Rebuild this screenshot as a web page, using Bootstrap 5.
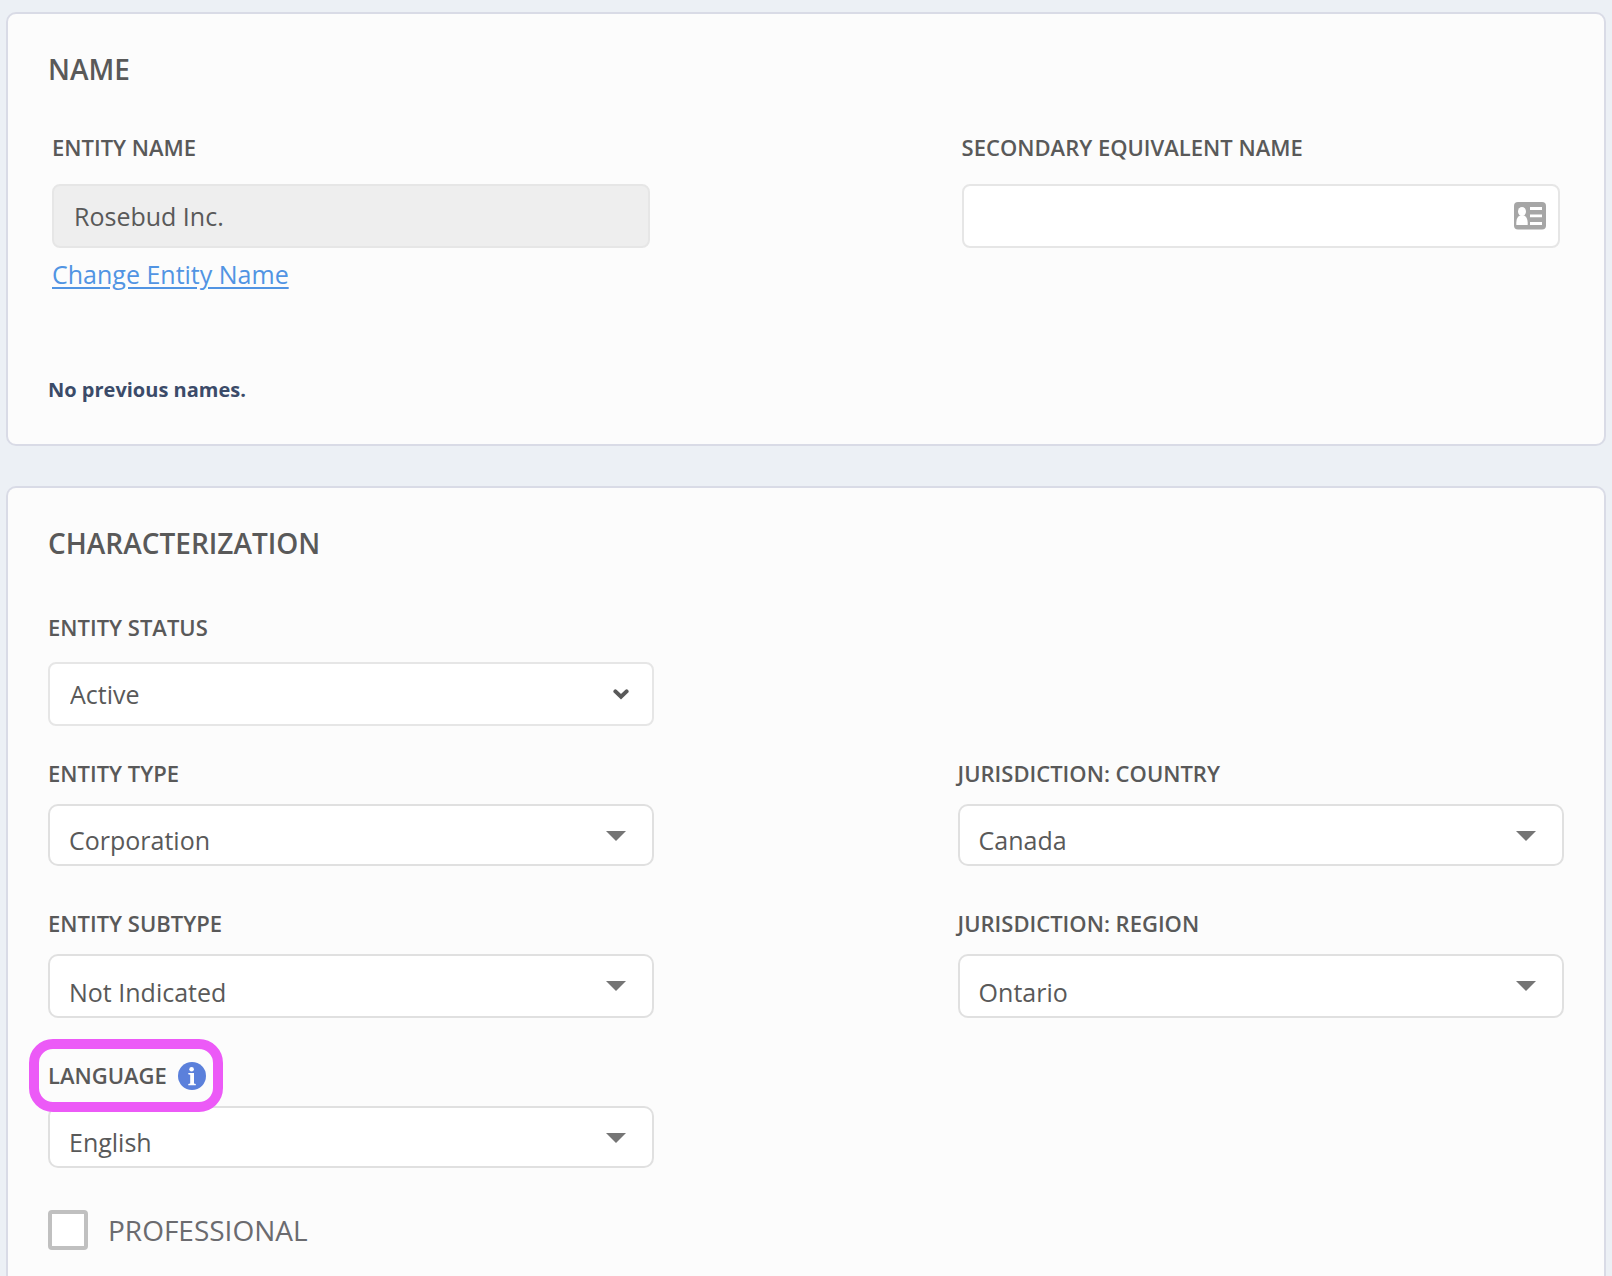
<!DOCTYPE html>
<html lang="en">
<head>
<meta charset="utf-8">
<meta name="viewport" content="width=device-width, initial-scale=1">
<title>Entity profile</title>
<link href="https://cdn.jsdelivr.net/npm/bootstrap@5.3.0/dist/css/bootstrap.min.css" rel="stylesheet">
<style>
  body { background: #ecf0f5; color: #595959; font-family: "Open Sans", "Noto Sans", sans-serif; font-size: 25px; padding: 12px 6px 0; }
  .panel { background: #fcfcfc; border: 2px solid #d9dbe6; border-radius: 10px; padding: 36px 40px 40px; }
  .panel + .panel { margin-top: 40px; }
  .panel-title { font-size: 28px; line-height: 38px; font-weight: 600; margin: 0; }
  .field { width: 40%; }
  .field-label { display: block; font-size: 22px; line-height: 30px; font-weight: 600; margin-bottom: 16px; }
  .status-row .field-label { margin-bottom: 20px; }
  .names { margin-top: 44px; }
  .names .field { padding: 0 4px; }
  .names .field-label { margin-bottom: 22px; }
  .names-history { font-size: 20px; line-height: 28px; font-weight: 700; color: #3b4b69; margin: 84px 0 0; }
  .change-link { display: block; width: fit-content; color: #5194e3; line-height: 36px; margin-top: 8px; text-underline-offset: 3px; }
  .form-control, .form-select, .form-control:disabled { color: #595959; border: 2px solid #e6e6e6; border-radius: 8px; font-size: 25px; line-height: 34px; height: 64px; padding: 13px 20px; }
  .form-control:disabled { background: #eeeeee; opacity: 1; }
  .form-select { padding: 13px 60px 13px 20px; background: #fff url("data:image/svg+xml,%3Csvg xmlns='http://www.w3.org/2000/svg' viewBox='0 0 16 11'%3E%3Cpath fill='none' stroke='%23595959' stroke-width='4' stroke-linecap='round' stroke-linejoin='miter' d='M2.4 2.4L8 7.8L13.6 2.4'/%3E%3C/svg%3E") no-repeat right 23px top 25px / 16px 11px; }
  .select-caret { height: 62px; border-color: #e0e0e0; border-radius: 10px; padding: 17px 60px 7px 19px; background: #fff url("data:image/svg+xml,%3Csvg xmlns='http://www.w3.org/2000/svg' viewBox='0 0 20 10'%3E%3Cpath fill='%23757575' d='M0 0H20L10 10Z'/%3E%3C/svg%3E") no-repeat right 26px top 25px / 20px 10px; }
  .select-tall { height: 64px; padding-top: 19px; }
  .card-glyph { right: 14px; top: 18px; width: 32px; height: 28px; }
  .status-row { margin-top: 50px; }
  .entity-rows { gap: 42px; margin-top: 32px; }
  .info-glyph { width: 28px; height: 28px; margin: 2px 0 0 11px; }
  .highlight-ring { left: -19px; top: -21px; width: 194px; height: 73px; border: 10px solid #ec5af7; border-radius: 24px; pointer-events: none; }
  .pro-check { gap: 20px; color: #6b6b6f; font-size: 28px; line-height: 38px; }
  .pro-check .form-check-input { width: 40px; height: 40px; border: 4px solid #c0c0c0; border-radius: 4px; margin: 0; }
</style>
</head>
<body class="d-flex flex-column min-vh-100">
<section class="panel" aria-labelledby="name-title">
  <h2 class="panel-title" id="name-title">NAME</h2>
  <div class="names d-flex justify-content-between">
    <div class="field">
      <label class="field-label" for="entity-name">ENTITY NAME</label>
      <input class="form-control" id="entity-name" type="text" value="Rosebud Inc." disabled>
      <a class="change-link" href="#">Change Entity Name</a>
    </div>
    <div class="field">
      <label class="field-label" for="secondary-name">SECONDARY EQUIVALENT NAME</label>
      <div class="position-relative">
        <input class="form-control" id="secondary-name" type="text">
        <svg class="card-glyph position-absolute" viewBox="0 0 32 28" aria-hidden="true">
          <rect width="32" height="27.500" rx="4" fill="#a6a6a6"/>
          <ellipse cx="8" cy="9.500" rx="4" ry="4.600" fill="#fff"/>
          <path d="M2.300 23V20.500Q2.500 15 6 13.500H10Q13.500 15 13.700 20.500V23Z" fill="#fff"/>
          <path d="M16 5H28V8H16ZM16 12.500H28V15.300H16ZM16 20H28V23H16Z" fill="#fff"/>
        </svg>
      </div>
    </div>
  </div>
  <p class="names-history">No previous names.</p>
</section>

<section class="panel flex-grow-1 border-bottom-0 rounded-bottom-0" aria-labelledby="char-title">
  <h2 class="panel-title" id="char-title">CHARACTERIZATION</h2>
  <div class="status-row">
    <div class="field">
      <label class="field-label" for="status">ENTITY STATUS</label>
      <select class="form-select" id="status"><option>Active</option></select>
    </div>
  </div>
  <div class="entity-rows d-flex flex-column">
    <div class="d-flex justify-content-between">
      <div class="field">
        <label class="field-label" for="type">ENTITY TYPE</label>
        <select class="form-select select-caret" id="type"><option>Corporation</option></select>
      </div>
      <div class="field">
        <label class="field-label" for="country">JURISDICTION: COUNTRY</label>
        <select class="form-select select-caret" id="country"><option>Canada</option></select>
      </div>
    </div>
    <div class="d-flex justify-content-between">
      <div class="field">
        <label class="field-label" for="subtype">ENTITY SUBTYPE</label>
        <select class="form-select select-caret select-tall" id="subtype"><option>Not Indicated</option></select>
      </div>
      <div class="field">
        <label class="field-label" for="region">JURISDICTION: REGION</label>
        <select class="form-select select-caret select-tall" id="region"><option>Ontario</option></select>
      </div>
    </div>
    <div class="field position-relative">
      <div class="d-flex align-items-start">
        <label class="field-label" for="language">LANGUAGE</label>
        <svg class="info-glyph" viewBox="0 0 28 28" role="img" aria-label="Information">
          <circle cx="14" cy="14" r="14" fill="#5b80db"/>
          <circle cx="13.600" cy="7.200" r="2.300" fill="#fff"/>
          <path d="M10.300 11H16V21.500L17.800 22V23.200H10.300V22L12.200 21.500V12.700L10.300 12.200Z" fill="#fff"/>
        </svg>
      </div>
      <select class="form-select select-caret" id="language"><option>English</option></select>
      <div class="highlight-ring position-absolute"></div>
    </div>
    <div class="pro-check d-flex align-items-center">
      <input class="form-check-input" type="checkbox" id="professional">
      <label for="professional">PROFESSIONAL</label>
    </div>
  </div>
</section>
<script src="https://cdn.jsdelivr.net/npm/bootstrap@5.3.0/dist/js/bootstrap.bundle.min.js"></script>
</body>
</html>
